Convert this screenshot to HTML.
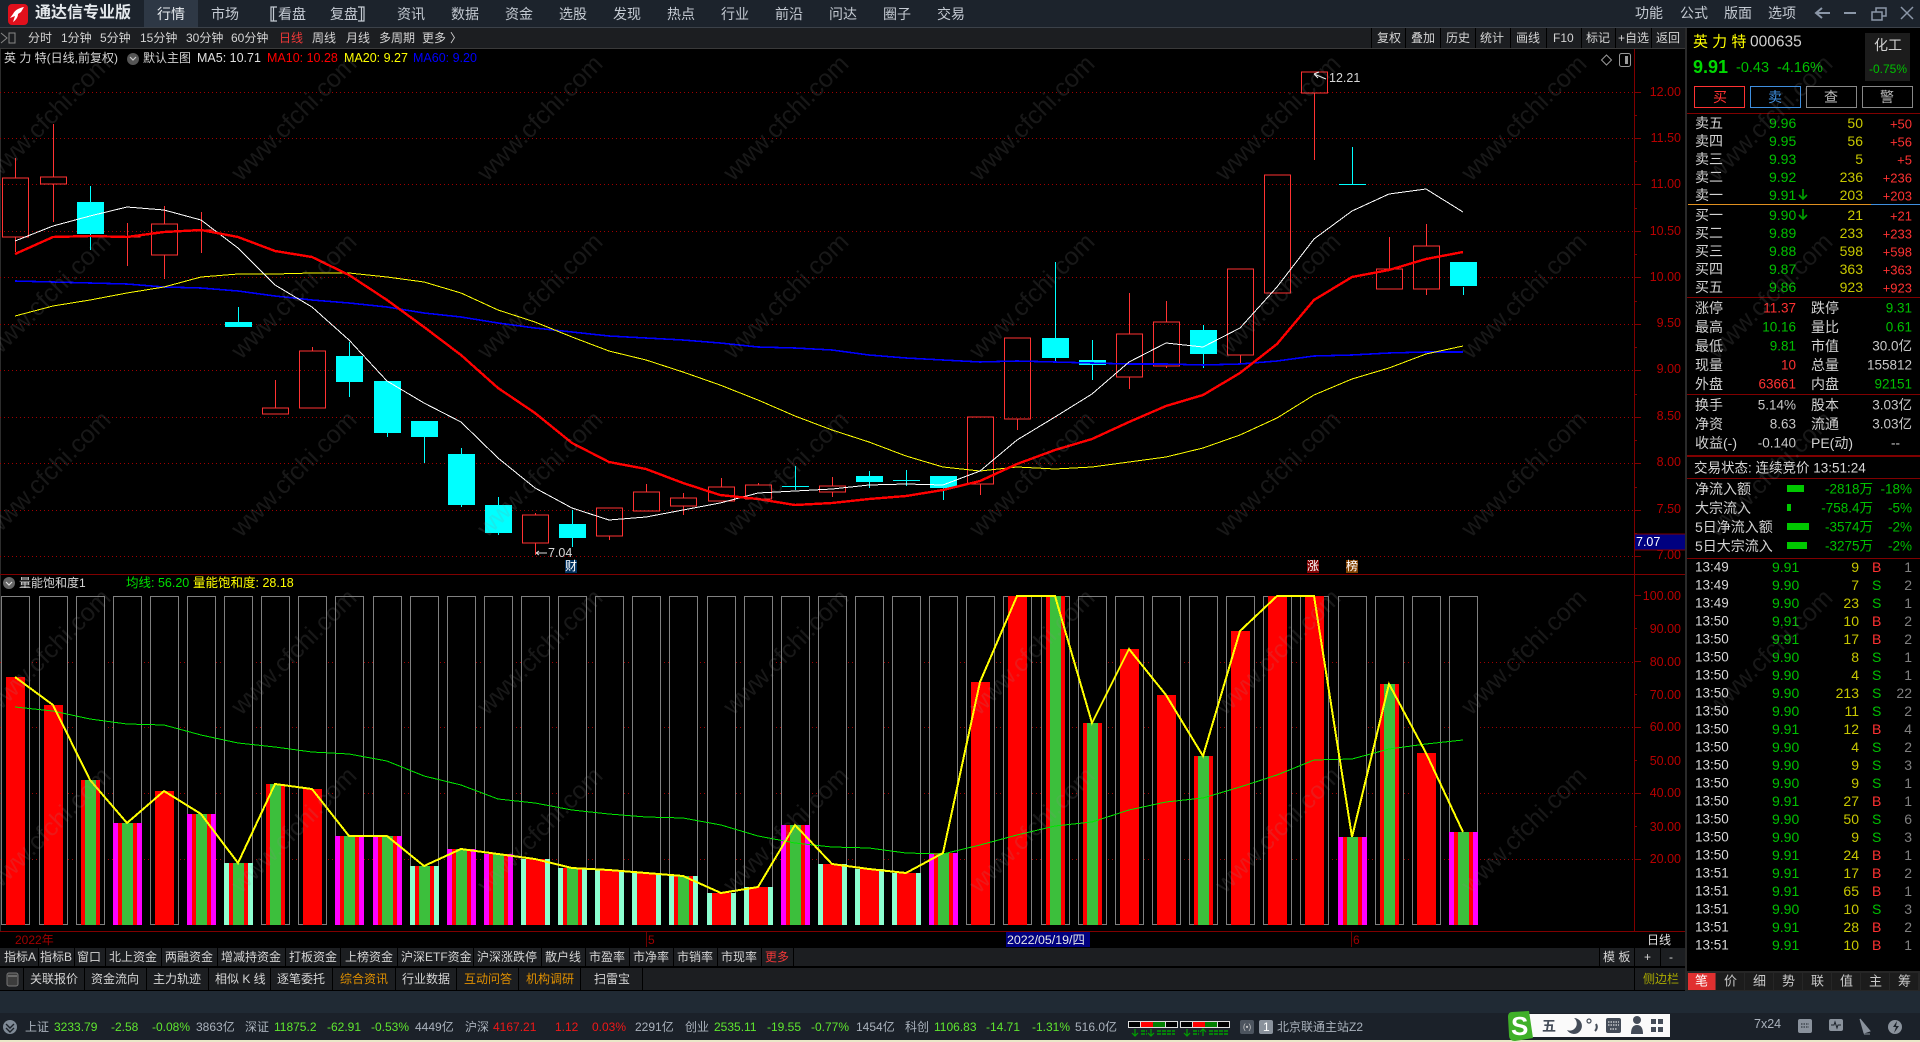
<!DOCTYPE html>
<html lang="zh">
<head>
<meta charset="utf-8">
<title>通达信专业版</title>
<style>
html,body{margin:0;padding:0;background:#000;width:1920px;height:1042px;overflow:hidden}
svg{display:block;position:absolute;left:0;top:0}
polyline{shape-rendering:crispEdges}
text{font-family:"Liberation Sans","Noto Sans CJK SC",sans-serif;dominant-baseline:central;white-space:pre}
.m{font-size:14px;fill:#c4cad2}
.t{font-size:12px;fill:#d4d4d4}
.ax{font-size:12.5px;fill:#b80000;text-anchor:end}
.l{font-size:14px;fill:#d2d2d2}
.g{font-size:14px;fill:#00c000}
.y{font-size:14px;fill:#c8c800;text-anchor:end}
.r{font-size:13px;fill:#ff3232;text-anchor:end}
.v{font-size:13.5px;text-anchor:end}
.b{font-size:12px;fill:#d8d8d8}
.s{font-size:12px;fill:#5fe62f}
.q{font-size:12px;fill:#aab2bc}
.wm{font-size:25px;fill:#8c8c8c;fill-opacity:.17;text-anchor:middle}
</style>
</head>
<body>
<svg width="1920" height="1042" viewBox="0 0 1920 1042" xmlns="http://www.w3.org/2000/svg">
<rect width="1920" height="1042" fill="#000"/>

<!-- top bar -->
<rect width="1920" height="27" fill="#1c232c"/>
<rect y="27" width="1920" height="1" fill="#3b4149"/>
<rect x="144" width="54" height="27" fill="#2e3845"/>
<rect x="8" y="4" width="20" height="21" rx="4" fill="#e0101c"/>
<path d="M24 7C19 8 15 10 13 14L10 18 15 16 13 22C16 20 18 17 18 14L21 12Z" fill="#fff"/>
<text x="35" y="13" style="font-size:16px;font-weight:bold;fill:#e4e8ec">通达信专业版</text>
<g class="m">
<text class="m" x="157" y="14" style="fill:#e8ecf0">行情</text>
<text class="m" x="211" y="14">市场</text>
<path d="M277 7h-6v14h6M273.500 7v14" fill="none" stroke="#c4cad2" stroke-width="1.2"/>
<text class="m" x="278" y="14">看盘</text>
<text class="m" x="330" y="14">复盘</text>
<path d="M358 7h6v14h-6M361.500 7v14" fill="none" stroke="#c4cad2" stroke-width="1.2"/>
<text class="m" x="397" y="14">资讯</text>
<text class="m" x="451" y="14">数据</text>
<text class="m" x="505" y="14">资金</text>
<text class="m" x="559" y="14">选股</text>
<text class="m" x="613" y="14">发现</text>
<text class="m" x="667" y="14">热点</text>
<text class="m" x="721" y="14">行业</text>
<text class="m" x="775" y="14">前沿</text>
<text class="m" x="829" y="14">问达</text>
<text class="m" x="883" y="14">圈子</text>
<text class="m" x="937" y="14">交易</text>
<text class="m" x="1635" y="13">功能</text>
<text class="m" x="1680" y="13">公式</text>
<text class="m" x="1724" y="13">版面</text>
<text class="m" x="1768" y="13">选项</text>
</g>
<path d="M1830 13H1816M1822 8L1816 13 1822 18" fill="none" stroke="#8b97a8" stroke-width="2"/>
<path d="M1844 13H1856" stroke="#8b97a8" stroke-width="2"/>
<path d="M1872 12h10v8h-10zM1876 12V8h10v8h-4" fill="none" stroke="#8b97a8" stroke-width="1.5"/>
<path d="M1901 7L1913 19M1913 7L1901 19" stroke="#8b97a8" stroke-width="1.5"/>

<!-- second row -->
<rect y="28" width="1686" height="20" fill="#1c1e21"/>
<rect y="48" width="1686" height="1" fill="#3a3a3a"/>
<path d="M1 33l6 5-6 5M9 33h6v10h-6z" fill="none" stroke="#888" stroke-width="1"/>
<text class="t" x="28" y="38">分时</text>
<text class="t" x="61" y="38">1分钟</text>
<text class="t" x="100" y="38">5分钟</text>
<text class="t" x="140" y="38">15分钟</text>
<text class="t" x="186" y="38">30分钟</text>
<text class="t" x="231" y="38">60分钟</text>
<text class="t" x="279" y="38" style="fill:#f03838">日线</text>
<text class="t" x="312" y="38">周线</text>
<text class="t" x="346" y="38">月线</text>
<text class="t" x="379" y="38">多周期</text>
<text class="t" x="422" y="38">更多</text>
<text class="t" x="450" y="38">〉</text>
<path d="M1371.5 28V48M1405.5 28V48M1440.5 28V48M1475.5 28V48M1510.5 28V48M1546.5 28V48M1581.5 28V48M1615.5 28V48M1651.5 28V48" stroke="#000"/>
<text class="t" x="1377" y="38">复权</text>
<text class="t" x="1411" y="38">叠加</text>
<text class="t" x="1446" y="38">历史</text>
<text class="t" x="1480" y="38">统计</text>
<text class="t" x="1516" y="38">画线</text>
<text class="t" x="1553" y="38">F10</text>
<text class="t" x="1586" y="38">标记</text>
<text class="t" x="1618" y="38">+自选</text>
<text class="t" x="1656" y="38">返回</text>

<!-- main chart grid + axis -->
<rect x="0" y="49" width="1" height="882" fill="#2c2c2c"/>
<path d="M0 92.5H1634M0 138.5H1634M0 184.5H1634M0 231.5H1634M0 277.5H1634M0 324.5H1634M0 370.5H1634M0 417.5H1634M0 463.5H1634M0 510.5H1634M0 556.5H1634" stroke="#a00000" stroke-dasharray="1 3" fill="none"/>
<path d="M1634.5 49V931" stroke="#800000" fill="none"/>
<path d="M1634 92.5h7M1634 138.5h7M1634 184.5h7M1634 231.5h7M1634 277.5h7M1634 324.5h7M1634 370.5h7M1634 417.5h7M1634 463.5h7M1634 510.5h7M1634 556.5h7M1634 115.5h3M1634 161.5h3M1634 208.5h3M1634 254.5h3M1634 301.5h3M1634 347.5h3M1634 394.5h3M1634 440.5h3M1634 487.5h3M1634 533.5h3M1634 595.5h7M1634 628.5h3M1634 661.5h7M1634 694.5h3M1634 727.5h7M1634 760.5h3M1634 793.5h7M1634 826.5h3M1634 859.5h7" stroke="#800000" fill="none"/>
<text class="ax" x="1681" y="92">12.00</text>
<text class="ax" x="1681" y="138">11.50</text>
<text class="ax" x="1681" y="184">11.00</text>
<text class="ax" x="1681" y="231">10.50</text>
<text class="ax" x="1681" y="277">10.00</text>
<text class="ax" x="1681" y="323">9.50</text>
<text class="ax" x="1681" y="369">9.00</text>
<text class="ax" x="1681" y="416">8.50</text>
<text class="ax" x="1681" y="462">8.00</text>
<text class="ax" x="1681" y="509">7.50</text>
<text class="ax" x="1681" y="555">7.00</text>
<rect x="1635" y="534" width="50" height="16" fill="#000080"/>
<path d="M1634 534h51M1634 550h51" stroke="#800000"/>
<text x="1636" y="542" style="font-size:12.5px;fill:#fff">7.07</text>

<!-- red candles -->
<path fill="none" stroke="#ff3232" d="M15.5 158V178M15.5 237V252M2.5 178h26v59h-26zM53.5 124V177M53.5 184V222M40.5 177h26v7h-26zM127.5 223V266M114.5 237h26M164.5 206V224M164.5 255V279M151.5 224h26v31h-26zM201.5 212V253M188.5 230h26M275.5 380V408M262.5 408h26v6h-26zM312.5 347V351M299.5 351h26v57h-26zM535.5 513V515M535.5 543V555M522.5 515h26v28h-26zM609.5 536V540M596.5 508h26v28h-26zM646.5 484V492M633.5 492h26v19h-26zM683.5 493V498M683.5 506V515M670.5 498h26v8h-26zM721.5 478V487M708.5 487h26v14h-26zM758.5 483V485M745.5 485h26v14h-26zM832.5 477V486M832.5 492V497M819.5 486h26v6h-26zM980.5 495V484M967.5 417h26v67h-26zM1017.5 419V430M1004.5 338h26v81h-26zM1129.5 293V334M1129.5 377V389M1116.5 334h26v43h-26zM1166.5 301V322M1166.5 366V368M1153.5 322h26v44h-26zM1240.5 355V363M1227.5 269h26v86h-26zM1264.5 175h26v118h-26zM1314.5 93V160M1301.5 72h26v21h-26zM1389.5 237V269M1376.5 269h26v20h-26zM1426.5 224V246M1426.5 289V295M1413.5 246h26v43h-26z"/>
<!-- cyan candles -->
<path fill="none" stroke="#00ffff" d="M90.5 186V250M238.5 307V322M349.5 342V397M387.5 381V437M424.5 421V463M461.5 448V507M498.5 497V535M572.5 510V547M795.5 466V490M782 486.5h27M869.5 471V488M906.5 470V486M893 480.5h27M943.5 476V500M1055.5 262V361M1092.5 340V380M1203.5 325V368M1352.5 147V184M1339 184.5h27M1463.5 287V295"/>
<path fill="#00ffff" d="M77 202h27v32h-27zM225 322h27v5h-27zM336 356h27v26h-27zM374 381h27v52h-27zM411 421h27v16h-27zM448 454h27v51h-27zM485 505h27v28h-27zM559 524h27v14h-27zM856 476h27v6h-27zM930 476h27v12h-27zM1042 338h27v20h-27zM1079 360h27v5h-27zM1190 330h27v24h-27zM1450 262h27v24h-27z"/>

<!-- MA lines -->
<polyline fill="none" stroke="#0000ff" stroke-width="1.6" points="15,281 53,282 90,283 127,284 164,287 201,288 238,291 275,296 312,300 349,303 387,307 424,313 461,317 498,323 535,328 572,332 609,336 646,338 683,340 720,343 758,347 795,348 832,350 869,355 906,358 943,360 980,362 1017,361 1055,362 1092,363 1129,364 1166,364 1203,365 1240,364 1277,361 1314,356 1352,355 1389,353 1426,352 1463,352"/>
<polyline fill="none" stroke="#ffff00" stroke-width="1" points="15,316 53,306 90,300 127,293 164,287 201,277 238,274 275,274 312,273 349,273 387,277 424,282 461,293 498,310 535,322 572,337 609,351 646,360 683,372 720,385 758,400 795,416 832,430 869,442 906,456 943,467 980,471 1017,467 1055,469 1092,467 1129,462 1166,457 1203,448 1240,435 1277,418 1314,395 1352,379 1389,368 1426,354 1463,346"/>
<polyline fill="none" stroke="#ffffff" stroke-width="1" points="15,241 53,226 90,216 127,207 164,210 201,220 238,248 275,285 312,307 349,340 387,381 424,403 461,422 498,458 535,488 572,508 609,520 646,517 683,510 720,503 758,493 795,491 832,489 869,485 906,484 943,485 980,471 1017,440 1055,417 1092,394 1129,362 1166,343 1203,347 1240,328 1277,287 1314,239 1352,211 1389,194 1426,189 1463,212"/>
<polyline fill="none" stroke="#ff0000" stroke-width="2.4" points="15,254 53,237 90,236 127,237 164,232 201,230 238,237 275,251 312,257 349,275 387,300 424,327 461,355 498,388 535,413 572,443 609,462 646,469 683,483 720,495 758,499 795,505 832,503 869,499 906,496 943,490 980,481 1017,464 1055,450 1092,439 1129,422 1166,406 1203,395 1240,373 1277,344 1314,300 1352,277 1389,270 1426,259 1463,252"/>

<!-- chart labels -->
<path d="M1314 74L1326 79M1314 74l5-2M1314 74l4 4" stroke="#eee" fill="none"/>
<text x="1329" y="78" style="font-size:12.5px;fill:#d8d8d8">12.21</text>
<path d="M536 553h11M536 553l3-2M536 553l3 2" stroke="#ddd" fill="none"/>
<text x="548" y="553" style="font-size:12.5px;fill:#d8d8d8">7.04</text>
<rect x="565" y="560" width="12" height="13" fill="#00305f"/>
<text x="565" y="566" style="font-size:12px;fill:#fff">财</text>
<rect x="1307" y="560" width="12" height="13" fill="#800000"/>
<text x="1307" y="566" style="font-size:12px;fill:#fff">涨</text>
<rect x="1346" y="560" width="12" height="13" fill="#804000"/>
<text x="1346" y="566" style="font-size:12px;fill:#fff">榜</text>
<path d="M1606.5 55l5 5-5 5-5-5z" fill="none" stroke="#999"/>
<rect x="1619.5" y="53.5" width="11" height="13" rx="2" fill="none" stroke="#999"/>
<rect x="1625" y="56" width="3" height="8" fill="#999"/>

<!-- legend -->
<text x="4" y="58" style="font-size:12px;fill:#d4d4d4">英 力 特(日线,前复权)</text>
<circle cx="133" cy="59" r="6" fill="#555"/><path d="M130 57l3 3 3-3" fill="none" stroke="#ccc" stroke-width="1.2"/>
<text x="143" y="58" style="font-size:12px;fill:#d4d4d4">默认主图</text>
<text x="197" y="58" style="font-size:12.5px;fill:#e0e0e0">MA5: 10.71</text>
<text x="267" y="58" style="font-size:12.5px;fill:#ff0000">MA10: 10.28</text>
<text x="344" y="58" style="font-size:12.5px;fill:#ffff00">MA20: 9.27</text>
<text x="413" y="58" style="font-size:12.5px;fill:#0000ff">MA60: 9.20</text>

<!-- volume panel -->
<path d="M0 574.5H1686" stroke="#800000" fill="none"/>
<circle cx="9" cy="583" r="6" fill="#666"/><path d="M6 582l3 3 3-3" fill="none" stroke="#ddd" stroke-width="1.2"/>
<text x="19" y="583" style="font-size:12px;fill:#d8d8d8">量能饱和度1</text>
<text x="126" y="583" style="font-size:12.5px;fill:#00e000">均线: 56.20</text>
<text x="193" y="583" style="font-size:12.5px;fill:#ffff00">量能饱和度: 28.18</text>
<text class="ax" x="1681" y="596">100.00</text>
<text class="ax" x="1681" y="629">90.00</text>
<text class="ax" x="1681" y="662">80.00</text>
<text class="ax" x="1681" y="695">70.00</text>
<text class="ax" x="1681" y="727">60.00</text>
<text class="ax" x="1681" y="761">50.00</text>
<text class="ax" x="1681" y="793">40.00</text>
<text class="ax" x="1681" y="827">30.00</text>
<text class="ax" x="1681" y="859">20.00</text>
<path d="M0 662.5H1634M0 727.5H1634M0 793.5H1634M0 859.5H1634" stroke="#a00000" stroke-dasharray="1 3" fill="none"/>
<!-- boxes -->
<path fill="#000" stroke="#808080" d="M1.5 596.5h28V924.5h-28zM39.5 596.5h28V924.5h-28zM76.5 596.5h28V924.5h-28zM113.5 596.5h28V924.5h-28zM150.5 596.5h28V924.5h-28zM187.5 596.5h28V924.5h-28zM224.5 596.5h28V924.5h-28zM261.5 596.5h28V924.5h-28zM298.5 596.5h28V924.5h-28zM335.5 596.5h28V924.5h-28zM373.5 596.5h28V924.5h-28zM410.5 596.5h28V924.5h-28zM447.5 596.5h28V924.5h-28zM484.5 596.5h28V924.5h-28zM521.5 596.5h28V924.5h-28zM558.5 596.5h28V924.5h-28zM595.5 596.5h28V924.5h-28zM632.5 596.5h28V924.5h-28zM669.5 596.5h28V924.5h-28zM707.5 596.5h28V924.5h-28zM744.5 596.5h28V924.5h-28zM781.5 596.5h28V924.5h-28zM818.5 596.5h28V924.5h-28zM855.5 596.5h28V924.5h-28zM892.5 596.5h28V924.5h-28zM929.5 596.5h28V924.5h-28zM966.5 596.5h28V924.5h-28zM1003.5 596.5h28V924.5h-28zM1041.5 596.5h28V924.5h-28zM1078.5 596.5h28V924.5h-28zM1115.5 596.5h28V924.5h-28zM1152.5 596.5h28V924.5h-28zM1189.5 596.5h28V924.5h-28zM1226.5 596.5h28V924.5h-28zM1263.5 596.5h28V924.5h-28zM1300.5 596.5h28V924.5h-28zM1338.5 596.5h28V924.5h-28zM1375.5 596.5h28V924.5h-28zM1412.5 596.5h28V924.5h-28zM1449.5 596.5h28V924.5h-28z"/>
<!-- magenta outer -->
<path fill="#ff00ff" d="M113 823h29V925h-29zM187 814h29V925h-29zM335 836h29V925h-29zM373 836h29V925h-29zM447 849h29V925h-29zM484 854h29V925h-29zM781 825h29V925h-29zM929 853h29V925h-29zM1338 837h29V925h-29zM1449 832h29V925h-29z"/>
<!-- mint outer -->
<path fill="#8cffd0" d="M224 863h29V925h-29zM410 866h29V925h-29zM521 859h29V925h-29zM558 868h29V925h-29zM595 870h29V925h-29zM632 873h29V925h-29zM669 876h29V925h-29zM707 893h29V925h-29zM744 887h29V925h-29zM818 864h29V925h-29zM855 869h29V925h-29zM892 873h29V925h-29z"/>
<!-- red -->
<path fill="#ff0000" d="M6 677h19V925h-19zM44 705h19V925h-19zM81 780h19V925h-19zM118 823h19V925h-19zM155 791h19V925h-19zM192 814h19V925h-19zM229 863h19V925h-19zM266 784h19V925h-19zM303 789h19V925h-19zM340 836h19V925h-19zM378 836h19V925h-19zM415 866h19V925h-19zM452 849h19V925h-19zM489 854h19V925h-19zM526 859h19V925h-19zM563 868h19V925h-19zM600 870h19V925h-19zM637 873h19V925h-19zM674 876h19V925h-19zM712 893h19V925h-19zM749 887h19V925h-19zM786 825h19V925h-19zM823 864h19V925h-19zM860 869h19V925h-19zM897 873h19V925h-19zM934 853h19V925h-19zM971 682h19V925h-19zM1008 596h19V925h-19zM1046 596h19V925h-19zM1083 723h19V925h-19zM1120 649h19V925h-19zM1157 695h19V925h-19zM1194 756h19V925h-19zM1231 631h19V925h-19zM1268 596h19V925h-19zM1305 596h19V925h-19zM1343 837h19V925h-19zM1380 684h19V925h-19zM1417 753h19V925h-19zM1454 832h19V925h-19z"/>
<!-- green -->
<path fill="#3cbf3c" d="M85 780h11V925h-11zM122 823h11V925h-11zM196 814h11V925h-11zM233 863h11V925h-11zM270 784h11V925h-11zM344 836h11V925h-11zM382 836h11V925h-11zM419 866h11V925h-11zM456 849h11V925h-11zM493 854h11V925h-11zM567 868h11V925h-11zM678 876h11V925h-11zM790 825h11V925h-11zM938 853h11V925h-11zM1050 596h11V925h-11zM1087 723h11V925h-11zM1198 756h11V925h-11zM1347 837h11V925h-11zM1384 684h11V925h-11zM1458 832h11V925h-11z"/>
<polyline fill="none" stroke="#00e600" stroke-width="1" points="15,707 53,711 90,719 127,724 164,725 201,735 238,743 275,747 312,752 349,754 387,761 424,776 461,785 498,799 535,803 572,810 609,814 646,817 683,818 721,825 758,836 795,843 832,847 869,848 906,853 943,854 980,845 1017,835 1055,826 1092,822 1129,810 1166,802 1203,798 1240,787 1277,775 1314,760 1352,759 1389,749 1426,744 1463,740"/>
<polyline fill="none" stroke="#ffff00" stroke-width="2" points="15,677 53,705 90,780 127,823 164,791 201,814 238,863 275,784 312,789 349,836 387,836 424,866 461,849 498,854 535,859 572,868 609,870 646,873 683,876 721,893 758,887 795,825 832,864 869,869 906,873 943,853 980,682 1017,596 1055,596 1092,723 1129,649 1166,695 1203,756 1240,631 1277,596 1314,596 1352,837 1389,684 1426,753 1463,832"/>

<!-- date axis -->
<path d="M0 931.5H1686" stroke="#800000" fill="none"/>
<text x="15" y="940" style="font-size:12px;fill:#a00000">2022年</text>
<path d="M646.5 932V947M1351.5 932V947" stroke="#700000"/>
<text x="648" y="940" style="font-size:12px;fill:#a00000">5</text>
<text x="1353" y="940" style="font-size:12px;fill:#a00000">6</text>
<rect x="1006" y="932" width="84" height="15" fill="#000080"/>
<text x="1007" y="940" style="font-size:12.400px;fill:#e8e8e8">2022/05/19/四</text>
<text x="1647" y="940" class="t" style="fill:#e0e0e0">日线</text>

<!-- tab rows -->
<rect y="948" width="1686" height="18" fill="#1c1e21"/>
<rect y="968" width="1686" height="22" fill="#1c1e21"/>
<path d="M38.5 948V966M74.5 948V966M105.5 948V966M161.5 948V966M217.5 948V966M285.5 948V966M340.5 948V966M397.5 948V966M473.5 948V966M541.5 948V966M585.5 948V966M629.5 948V966M673.5 948V966M717.5 948V966M761.5 948V966M793.5 948V966M1599.5 948V966M1634.5 948V966M1660.5 948V966M23.5 968V990M84.5 968V990M146.5 968V990M208.5 968V990M270.5 968V990M332.5 968V990M395.5 968V990M456.5 968V990M518.5 968V990M580.5 968V990M642.5 968V990M1634.5 968V990" stroke="#000" fill="none"/>
<text class="t" x="4" y="957">指标A</text>
<text class="t" x="40" y="957">指标B</text>
<text class="t" x="77" y="957">窗口</text>
<text class="t" x="109" y="957">北上资金</text>
<text class="t" x="165" y="957">两融资金</text>
<text class="t" x="221" y="957">增减持资金</text>
<text class="t" x="289" y="957">打板资金</text>
<text class="t" x="345" y="957">上榜资金</text>
<text class="t" x="401" y="957">沪深ETF资金</text>
<text class="t" x="477" y="957">沪深涨跌停</text>
<text class="t" x="545" y="957">散户线</text>
<text class="t" x="589" y="957">市盈率</text>
<text class="t" x="633" y="957">市净率</text>
<text class="t" x="677" y="957">市销率</text>
<text class="t" x="721" y="957">市现率</text>
<text class="t" x="765" y="957" style="fill:#f03838">更多</text>
<text class="t" x="1603" y="957">模 板</text>
<text class="t" x="1644" y="957">+</text>
<text class="t" x="1669" y="957">-</text>
<rect x="7" y="973" width="11" height="13" rx="2" fill="#3c3c3c" stroke="#777"/>
<path d="M8 976h9" stroke="#999"/>
<text class="t" x="30" y="979">关联报价</text>
<text class="t" x="91" y="979">资金流向</text>
<text class="t" x="153" y="979">主力轨迹</text>
<text class="t" x="215" y="979">相似 K 线</text>
<text class="t" x="277" y="979">逐笔委托</text>
<text class="t" x="340" y="979" style="fill:#e09000">综合资讯</text>
<text class="t" x="402" y="979">行业数据</text>
<text class="t" x="464" y="979" style="fill:#e09000">互动问答</text>
<text class="t" x="526" y="979" style="fill:#e09000">机构调研</text>
<text class="t" x="594" y="979">扫雷宝</text>
<text class="t" x="1643" y="979" style="fill:#a8a800">侧边栏</text>

<!-- right panel -->
<rect x="1685" y="28" width="2" height="963" fill="#2a2a2a"/>
<text x="1693" y="42" style="font-size:15px;fill:#ffff00">英 力 特</text>
<text x="1750" y="42" style="font-size:15.5px;fill:#d0d0d0">000635</text>
<text x="1693" y="67" style="font-size:18px;font-weight:bold;fill:#00d800">9.91</text>
<text x="1736" y="68" style="font-size:14.5px;fill:#00c000">-0.43</text>
<text x="1777" y="68" style="font-size:14.5px;fill:#00c000">-4.16%</text>
<rect x="1865" y="33" width="45" height="48" fill="#1c1c1c"/>
<text x="1874" y="45" style="font-size:14px;fill:#d0d0d0">化工</text>
<text x="1869" y="69" style="font-size:12px;fill:#00c000">-0.75%</text>
<rect x="1694.5" y="86.5" width="50" height="21" fill="none" stroke="#ff3232"/>
<text x="1713" y="97" style="font-size:14px;fill:#ff3232">买</text>
<rect x="1750.5" y="86.5" width="50" height="21" fill="none" stroke="#3f8fdf"/>
<text x="1768" y="97" style="font-size:14px;fill:#3f8fdf">卖</text>
<rect x="1806.5" y="86.5" width="50" height="21" fill="none" stroke="#888"/>
<text x="1824" y="97" style="font-size:14px;fill:#bbb">查</text>
<rect x="1862.5" y="86.5" width="50" height="21" fill="none" stroke="#888"/>
<text x="1880" y="97" style="font-size:14px;fill:#bbb">警</text>
<path d="M1687 113.5H1920M1687 297.5H1920M1687 394.5H1920M1687 478.5H1920M1687 558.5H1920" stroke="#800000" fill="none"/>
<path d="M1687 456H1920" stroke="#800000" stroke-width="2"/>
<rect x="1688" y="204" width="183" height="1" fill="#e09020"/>
<rect x="1871" y="204" width="49" height="1" fill="#3f8fdf"/>

<text class="l" x="1695" y="123">卖五</text><text class="g" x="1769" y="123">9.96</text><text class="y" x="1863" y="123">50</text><text class="r" x="1912" y="124">+50</text>
<text class="l" x="1695" y="141">卖四</text><text class="g" x="1769" y="141">9.95</text><text class="y" x="1863" y="141">56</text><text class="r" x="1912" y="142">+56</text>
<text class="l" x="1695" y="159">卖三</text><text class="g" x="1769" y="159">9.93</text><text class="y" x="1863" y="159">5</text><text class="r" x="1912" y="160">+5</text>
<text class="l" x="1695" y="177">卖二</text><text class="g" x="1769" y="177">9.92</text><text class="y" x="1863" y="177">236</text><text class="r" x="1912" y="178">+236</text>
<text class="l" x="1695" y="195">卖一</text><text class="g" x="1769" y="195">9.91</text><text class="y" x="1863" y="195">203</text><text class="r" x="1912" y="196">+203</text>
<path d="M1803 189v10M1799 195l4 4 4-4" fill="none" stroke="#00a000" stroke-width="1.6"/>
<text class="l" x="1695" y="215">买一</text><text class="g" x="1769" y="215">9.90</text><text class="y" x="1863" y="215">21</text><text class="r" x="1912" y="216">+21</text>
<path d="M1803 209v10M1799 215l4 4 4-4" fill="none" stroke="#00a000" stroke-width="1.6"/>
<text class="l" x="1695" y="233">买二</text><text class="g" x="1769" y="233">9.89</text><text class="y" x="1863" y="233">233</text><text class="r" x="1912" y="234">+233</text>
<text class="l" x="1695" y="251">买三</text><text class="g" x="1769" y="251">9.88</text><text class="y" x="1863" y="251">598</text><text class="r" x="1912" y="252">+598</text>
<text class="l" x="1695" y="269">买四</text><text class="g" x="1769" y="269">9.87</text><text class="y" x="1863" y="269">363</text><text class="r" x="1912" y="270">+363</text>
<text class="l" x="1695" y="287">买五</text><text class="g" x="1769" y="287">9.86</text><text class="y" x="1863" y="287">923</text><text class="r" x="1912" y="288">+923</text>

<text class="l" x="1695" y="308">涨停</text><text class="v" x="1796" y="308" style="fill:#ff3232">11.37</text><text class="l" x="1811" y="308">跌停</text><text class="v" x="1912" y="308" style="fill:#00c000">9.31</text>
<text class="l" x="1695" y="327">最高</text><text class="v" x="1796" y="327" style="fill:#00c000">10.16</text><text class="l" x="1811" y="327">量比</text><text class="v" x="1912" y="327" style="fill:#00c000">0.61</text>
<text class="l" x="1695" y="346">最低</text><text class="v" x="1796" y="346" style="fill:#00c000">9.81</text><text class="l" x="1811" y="346">市值</text><text class="v" x="1912" y="346" style="fill:#c8c8c8">30.0亿</text>
<text class="l" x="1695" y="365">现量</text><text class="v" x="1796" y="365" style="fill:#ff3232">10</text><text class="l" x="1811" y="365">总量</text><text class="v" x="1912" y="365" style="fill:#c8c8c8">155812</text>
<text class="l" x="1695" y="384">外盘</text><text class="v" x="1796" y="384" style="fill:#ff3232">63661</text><text class="l" x="1811" y="384">内盘</text><text class="v" x="1912" y="384" style="fill:#00c000">92151</text>
<text class="l" x="1695" y="405">换手</text><text class="v" x="1796" y="405" style="fill:#c8c8c8">5.14%</text><text class="l" x="1811" y="405">股本</text><text class="v" x="1912" y="405" style="fill:#c8c8c8">3.03亿</text>
<text class="l" x="1695" y="424">净资</text><text class="v" x="1796" y="424" style="fill:#c8c8c8">8.63</text><text class="l" x="1811" y="424">流通</text><text class="v" x="1912" y="424" style="fill:#c8c8c8">3.03亿</text>
<text class="l" x="1695" y="443">收益(-)</text><text class="v" x="1796" y="443" style="fill:#c8c8c8">-0.140</text><text class="l" x="1811" y="443">PE(动)</text><text class="v" x="1900" y="443" style="fill:#c8c8c8">--</text>
<text x="1694" y="468" style="font-size:13.5px;fill:#d8d8d8">交易状态: 连续竞价 13:51:24</text>

<text class="l" x="1695" y="489">净流入额</text><rect x="1787" y="485" width="17" height="7" fill="#00c800"/><text class="v" x="1873" y="489" style="fill:#00c000">-2818万</text><text class="v" x="1912" y="489" style="fill:#00c000">-18%</text>
<text class="l" x="1695" y="508">大宗流入</text><rect x="1787" y="504" width="4" height="7" fill="#00c800"/><text class="v" x="1873" y="508" style="fill:#00c000">-758.4万</text><text class="v" x="1912" y="508" style="fill:#00c000">-5%</text>
<text class="l" x="1695" y="527">5日净流入额</text><rect x="1787" y="523" width="22" height="7" fill="#00c800"/><text class="v" x="1873" y="527" style="fill:#00c000">-3574万</text><text class="v" x="1912" y="527" style="fill:#00c000">-2%</text>
<text class="l" x="1695" y="546">5日大宗流入</text><rect x="1787" y="542" width="20" height="7" fill="#00c800"/><text class="v" x="1873" y="546" style="fill:#00c000">-3275万</text><text class="v" x="1912" y="546" style="fill:#00c000">-2%</text>

<!-- tick list -->
<g style="font-size:14px">
<g fill="#d8d8d8">
<text x="1695" y="567" style="font-size:13.5px">13:49</text><text x="1695" y="585" style="font-size:13.5px">13:49</text><text x="1695" y="603" style="font-size:13.5px">13:49</text><text x="1695" y="621" style="font-size:13.5px">13:50</text><text x="1695" y="639" style="font-size:13.5px">13:50</text><text x="1695" y="657" style="font-size:13.5px">13:50</text><text x="1695" y="675" style="font-size:13.5px">13:50</text><text x="1695" y="693" style="font-size:13.5px">13:50</text><text x="1695" y="711" style="font-size:13.5px">13:50</text><text x="1695" y="729" style="font-size:13.5px">13:50</text><text x="1695" y="747" style="font-size:13.5px">13:50</text><text x="1695" y="765" style="font-size:13.5px">13:50</text><text x="1695" y="783" style="font-size:13.5px">13:50</text><text x="1695" y="801" style="font-size:13.5px">13:50</text><text x="1695" y="819" style="font-size:13.5px">13:50</text><text x="1695" y="837" style="font-size:13.5px">13:50</text><text x="1695" y="855" style="font-size:13.5px">13:50</text><text x="1695" y="873" style="font-size:13.5px">13:51</text><text x="1695" y="891" style="font-size:13.5px">13:51</text><text x="1695" y="909" style="font-size:13.5px">13:51</text><text x="1695" y="927" style="font-size:13.5px">13:51</text><text x="1695" y="945" style="font-size:13.5px">13:51</text>
</g>
<g fill="#00c000">
<text x="1772" y="567">9.91</text><text x="1772" y="585">9.90</text><text x="1772" y="603">9.90</text><text x="1772" y="621">9.91</text><text x="1772" y="639">9.91</text><text x="1772" y="657">9.90</text><text x="1772" y="675">9.90</text><text x="1772" y="693">9.90</text><text x="1772" y="711">9.90</text><text x="1772" y="729">9.91</text><text x="1772" y="747">9.90</text><text x="1772" y="765">9.90</text><text x="1772" y="783">9.90</text><text x="1772" y="801">9.91</text><text x="1772" y="819">9.90</text><text x="1772" y="837">9.90</text><text x="1772" y="855">9.91</text><text x="1772" y="873">9.91</text><text x="1772" y="891">9.91</text><text x="1772" y="909">9.90</text><text x="1772" y="927">9.91</text><text x="1772" y="945">9.91</text>
</g>
<g fill="#c8c800" text-anchor="end">
<text x="1859" y="567">9</text><text x="1859" y="585">7</text><text x="1859" y="603">23</text><text x="1859" y="621">10</text><text x="1859" y="639">17</text><text x="1859" y="657">8</text><text x="1859" y="675">4</text><text x="1859" y="693">213</text><text x="1859" y="711">11</text><text x="1859" y="729">12</text><text x="1859" y="747">4</text><text x="1859" y="765">9</text><text x="1859" y="783">9</text><text x="1859" y="801">27</text><text x="1859" y="819">50</text><text x="1859" y="837">9</text><text x="1859" y="855">24</text><text x="1859" y="873">17</text><text x="1859" y="891">65</text><text x="1859" y="909">10</text><text x="1859" y="927">28</text><text x="1859" y="945">10</text>
</g>
<g fill="#ff3232">
<text x="1872" y="567">B</text><text x="1872" y="621">B</text><text x="1872" y="639">B</text><text x="1872" y="729">B</text><text x="1872" y="801">B</text><text x="1872" y="855">B</text><text x="1872" y="873">B</text><text x="1872" y="891">B</text><text x="1872" y="927">B</text><text x="1872" y="945">B</text>
</g>
<g fill="#00c000">
<text x="1872" y="585">S</text><text x="1872" y="603">S</text><text x="1872" y="657">S</text><text x="1872" y="675">S</text><text x="1872" y="693">S</text><text x="1872" y="711">S</text><text x="1872" y="747">S</text><text x="1872" y="765">S</text><text x="1872" y="783">S</text><text x="1872" y="819">S</text><text x="1872" y="837">S</text><text x="1872" y="909">S</text>
</g>
<g fill="#808080" text-anchor="end">
<text x="1912" y="567">1</text><text x="1912" y="585">2</text><text x="1912" y="603">1</text><text x="1912" y="621">2</text><text x="1912" y="639">2</text><text x="1912" y="657">1</text><text x="1912" y="675">1</text><text x="1912" y="693">22</text><text x="1912" y="711">2</text><text x="1912" y="729">4</text><text x="1912" y="747">2</text><text x="1912" y="765">3</text><text x="1912" y="783">1</text><text x="1912" y="801">1</text><text x="1912" y="819">6</text><text x="1912" y="837">3</text><text x="1912" y="855">1</text><text x="1912" y="873">2</text><text x="1912" y="891">1</text><text x="1912" y="909">3</text><text x="1912" y="927">2</text><text x="1912" y="945">1</text>
</g>
</g>

<!-- right tabs -->
<rect x="1687" y="971" width="233" height="20" fill="#262626"/>
<rect x="1688" y="973" width="27.5" height="17" fill="#e03030"/>
<rect x="1716" y="973" width="28" height="17" fill="#1c1c1c"/><rect x="1745" y="973" width="28" height="17" fill="#1c1c1c"/><rect x="1774" y="973" width="28" height="17" fill="#1c1c1c"/><rect x="1803" y="973" width="28" height="17" fill="#1c1c1c"/><rect x="1832" y="973" width="28" height="17" fill="#1c1c1c"/><rect x="1861" y="973" width="28" height="17" fill="#1c1c1c"/><rect x="1890" y="973" width="28" height="17" fill="#1c1c1c"/>
<g style="font-size:13px" fill="#c8c8c8">
<text x="1695" y="981" fill="#fff">笔</text><text x="1724" y="981">价</text><text x="1753" y="981">细</text><text x="1782" y="981">势</text><text x="1811" y="981">联</text><text x="1840" y="981">值</text><text x="1869" y="981">主</text><text x="1898" y="981">筹</text>
</g>

<!-- blank band and status bar -->
<rect y="991" width="1920" height="22" fill="#202a34"/>
<rect y="1013" width="1920" height="27" fill="#1b2129"/>
<rect y="1040" width="1920" height="2" fill="#e9e8c8"/>
<circle cx="10" cy="1027" r="7" fill="#7f8a96"/><path d="M6 1024l4 4 4-4M6 1028l4 4 4-4" fill="none" stroke="#1b2129" stroke-width="1.4"/>
<text class="q" x="25" y="1027">上证</text><text class="s" x="54" y="1027">3233.79</text><text class="s" x="111" y="1027">-2.58</text><text class="s" x="152" y="1027">-0.08%</text><text class="q" x="196" y="1027">3863亿</text>
<text class="q" x="245" y="1027">深证</text><text class="s" x="274" y="1027">11875.2</text><text class="s" x="327" y="1027">-62.91</text><text class="s" x="371" y="1027">-0.53%</text><text class="q" x="415" y="1027">4449亿</text>
<text class="q" x="465" y="1027">沪深</text><text x="493" y="1027" style="font-size:12px;fill:#f01818">4167.21</text><text x="555" y="1027" style="font-size:12px;fill:#f01818">1.12</text><text x="592" y="1027" style="font-size:12px;fill:#f01818">0.03%</text><text class="q" x="635" y="1027">2291亿</text>
<text class="q" x="685" y="1027">创业</text><text class="s" x="714" y="1027">2535.11</text><text class="s" x="767" y="1027">-19.55</text><text class="s" x="811" y="1027">-0.77%</text><text class="q" x="856" y="1027">1454亿</text>
<text class="q" x="905" y="1027">科创</text><text class="s" x="934" y="1027">1106.83</text><text class="s" x="986" y="1027">-14.71</text><text class="s" x="1032" y="1027">-1.31%</text><text class="q" x="1075" y="1027">516.0亿</text>
<!-- mini bars -->
<rect x="1128.5" y="1021.5" width="49" height="6" fill="#000" stroke="#ddd"/><rect x="1141" y="1022" width="12" height="5" fill="#ff0000"/><rect x="1153" y="1022" width="12" height="5" fill="#008000"/><path d="M1140.5 1021v6M1165.5 1021v6" stroke="#ddd"/>
<rect x="1180.5" y="1021.5" width="49" height="6" fill="#000" stroke="#ddd"/><rect x="1193" y="1022" width="12" height="5" fill="#ff0000"/><rect x="1205" y="1022" width="12" height="5" fill="#008000"/><path d="M1192.5 1021v6M1217.5 1021v6" stroke="#ddd"/>
<path d="M1135 1029v7M1132 1033l3 3 3-3M1151 1029v7M1148 1033l3 3 3-3M1187 1029v7M1184 1033l3 3 3-3M1203 1036v-7M1200 1032l3-3 3 3" fill="none" stroke="#00a000" stroke-width="1.2"/>
<path d="M1141 1031h6M1141 1034h6M1157 1031h18M1157 1034h18M1193 1031h6M1193 1034h6M1209 1031h20M1209 1034h20" stroke="#00a000" stroke-width="1.6" stroke-dasharray="4 1"/>
<rect x="1240" y="1020" width="14" height="14" rx="2" fill="#4c545e"/><text x="1243" y="1027" style="font-size:8px;fill:#ccc">(•)</text>
<rect x="1259" y="1020" width="14" height="14" rx="2" fill="#8a929c"/><text x="1263" y="1027" style="font-size:12px;fill:#fff">1</text>
<text class="q" x="1277" y="1027">北京联通主站Z2</text>
<!-- IME -->
<rect x="1525" y="1014" width="145" height="23" fill="#fafafa"/>
<path d="M1512 1012l17-1 4 27-18 3q-6 0-6-6l-1-18q0-5 4-5z" fill="#3fb028"/>
<text x="1511" y="1026" style="font-size:26px;font-weight:bold;fill:#fff">S</text>
<text x="1542" y="1026" style="font-size:14px;font-weight:bold;fill:#444c58">五</text>
<path d="M1574 1018a8 8 0 1 1-7 12 7 7 0 0 0 7-12z" fill="#444c58"/>
<circle cx="1589" cy="1021" r="2" fill="none" stroke="#444c58" stroke-width="1.2"/><path d="M1596 1024q2 4-1 7" fill="none" stroke="#444c58" stroke-width="2"/>
<rect x="1606" y="1018" width="15" height="15" rx="2" fill="#444c58"/><path d="M1608 1022h11M1608 1025h11M1610 1029h7" stroke="#fff" stroke-dasharray="1.5 1"/>
<circle cx="1637" cy="1020" r="4" fill="#444c58"/><path d="M1631 1034q0-9 6-9t6 9z" fill="#444c58"/>
<path d="M1651 1019h5v5h-5zM1658 1019h5v5h-5zM1651 1027h5v5h-5zM1658 1027h5v5h-5z" fill="#444c58"/>
<!-- right status icons -->
<text x="1754" y="1024" style="font-size:12.5px;fill:#aab2bc">7x24</text>
<rect x="1798" y="1019" width="14" height="14" rx="2" fill="#8a929c"/><path d="M1801 1024h8M1801 1027h8" stroke="#1b2129" stroke-dasharray="1.5 1"/>
<rect x="1829" y="1019" width="14" height="12" rx="2" fill="#8a929c"/><path d="M1836 1031v3M1832 1034h8M1831 1025h3l1-3 2 6 1-3h3" fill="none" stroke="#1b2129"/>
<path d="M1860 1019l10 12-6 2zM1864 1034h6" fill="#8a929c" stroke="#8a929c"/>
<circle cx="1895" cy="1027" r="7" fill="#8a929c"/><path d="M1897 1021l-4 6h3l-2 6 5-7h-3z" fill="#1b2129"/>

<!-- watermark -->
<g>
<text class="wm" transform="translate(48 118) rotate(-45)">www.cfchi.com</text><text class="wm" transform="translate(294 118) rotate(-45)">www.cfchi.com</text><text class="wm" transform="translate(540 118) rotate(-45)">www.cfchi.com</text><text class="wm" transform="translate(786 118) rotate(-45)">www.cfchi.com</text><text class="wm" transform="translate(1032 118) rotate(-45)">www.cfchi.com</text><text class="wm" transform="translate(1278 118) rotate(-45)">www.cfchi.com</text><text class="wm" transform="translate(1524 118) rotate(-45)">www.cfchi.com</text><text class="wm" transform="translate(1770 118) rotate(-45)">www.cfchi.com</text>
<text class="wm" transform="translate(48 296) rotate(-45)">www.cfchi.com</text><text class="wm" transform="translate(294 296) rotate(-45)">www.cfchi.com</text><text class="wm" transform="translate(540 296) rotate(-45)">www.cfchi.com</text><text class="wm" transform="translate(786 296) rotate(-45)">www.cfchi.com</text><text class="wm" transform="translate(1032 296) rotate(-45)">www.cfchi.com</text><text class="wm" transform="translate(1278 296) rotate(-45)">www.cfchi.com</text><text class="wm" transform="translate(1524 296) rotate(-45)">www.cfchi.com</text><text class="wm" transform="translate(1770 296) rotate(-45)">www.cfchi.com</text>
<text class="wm" transform="translate(48 474) rotate(-45)">www.cfchi.com</text><text class="wm" transform="translate(294 474) rotate(-45)">www.cfchi.com</text><text class="wm" transform="translate(540 474) rotate(-45)">www.cfchi.com</text><text class="wm" transform="translate(786 474) rotate(-45)">www.cfchi.com</text><text class="wm" transform="translate(1032 474) rotate(-45)">www.cfchi.com</text><text class="wm" transform="translate(1278 474) rotate(-45)">www.cfchi.com</text><text class="wm" transform="translate(1524 474) rotate(-45)">www.cfchi.com</text><text class="wm" transform="translate(1770 474) rotate(-45)">www.cfchi.com</text>
<text class="wm" transform="translate(48 652) rotate(-45)">www.cfchi.com</text><text class="wm" transform="translate(294 652) rotate(-45)">www.cfchi.com</text><text class="wm" transform="translate(540 652) rotate(-45)">www.cfchi.com</text><text class="wm" transform="translate(786 652) rotate(-45)">www.cfchi.com</text><text class="wm" transform="translate(1032 652) rotate(-45)">www.cfchi.com</text><text class="wm" transform="translate(1278 652) rotate(-45)">www.cfchi.com</text><text class="wm" transform="translate(1524 652) rotate(-45)">www.cfchi.com</text><text class="wm" transform="translate(1770 652) rotate(-45)">www.cfchi.com</text>
<text class="wm" transform="translate(48 830) rotate(-45)">www.cfchi.com</text><text class="wm" transform="translate(294 830) rotate(-45)">www.cfchi.com</text><text class="wm" transform="translate(540 830) rotate(-45)">www.cfchi.com</text><text class="wm" transform="translate(786 830) rotate(-45)">www.cfchi.com</text><text class="wm" transform="translate(1032 830) rotate(-45)">www.cfchi.com</text><text class="wm" transform="translate(1278 830) rotate(-45)">www.cfchi.com</text><text class="wm" transform="translate(1524 830) rotate(-45)">www.cfchi.com</text>
</g>
</svg>
</body>
</html>
